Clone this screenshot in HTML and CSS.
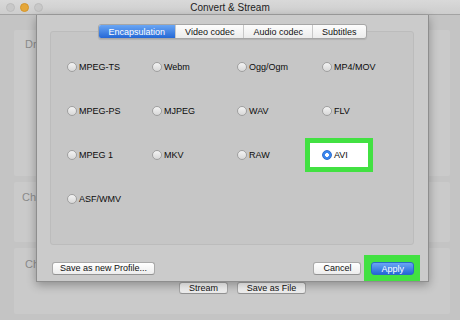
FILE: index.html
```html
<!DOCTYPE html>
<html>

<head>
    <title>Convert &amp; Stream</title>
    <link rel="stylesheet" href="styles.css">
</head>

<body>
    <div class="window">
        <div class="titlebar">
            <div class="lights">
                <span class="light"></span>
                <span class="light light-min"></span>
                <span class="light"></span>
            </div>
            <div class="title">Convert &amp; Stream</div>
        </div>

        <div class="content">
            <div class="panel panel-source"><span class="panel-label">Drop media here</span></div>
            <div class="panel panel-profile"><span class="panel-label">Choose Profile</span></div>
            <div class="panel panel-dest">
                <span class="panel-label">Choose Destination</span>
                <div class="dest-actions">
                    <a class="button button-stream">Stream</a>
                    <a class="button button-file">Save as File</a>
                </div>
            </div>
        </div>

        <div class="sheet">
            <div class="tabs">
                <a class="tab tab-active">Encapsulation</a>
                <a class="tab">Video codec</a>
                <a class="tab">Audio codec</a>
                <a class="tab">Subtitles</a>
            </div>

            <div class="formats">
                <label class="radio"><span class="dot"></span>MPEG-TS</label>
                <label class="radio"><span class="dot"></span>Webm</label>
                <label class="radio"><span class="dot"></span>Ogg/Ogm</label>
                <label class="radio"><span class="dot"></span>MP4/MOV</label>
                <label class="radio"><span class="dot"></span>MPEG-PS</label>
                <label class="radio"><span class="dot"></span>MJPEG</label>
                <label class="radio"><span class="dot"></span>WAV</label>
                <label class="radio"><span class="dot"></span>FLV</label>
                <label class="radio"><span class="dot"></span>MPEG 1</label>
                <label class="radio"><span class="dot"></span>MKV</label>
                <label class="radio"><span class="dot"></span>RAW</label>
                <label class="radio radio-marked"><span class="dot dot-on"></span>AVI</label>
                <label class="radio"><span class="dot"></span>ASF/WMV</label>
            </div>

            <div class="sheet-footer">
                <a class="button button-save">Save as new Profile...</a>
                <a class="button">Cancel</a>
                <span class="marker"><a class="button button-primary">Apply</a></span>
            </div>
        </div>
    </div>
</body>

</html>
```

FILE: styles.css
```css
:root {
    --window-bg: #c4c4c4;
    --panel-bg: #cacaca;
    --sheet-bg: #cbcbcb;
    --marker: #42e142;
    --blue-top: #6aa6f4;
    --blue-bottom: #2468d6;
}

body {
    margin: 0;
    width: 460px;
    height: 320px;
    overflow: hidden;
    font-family: 'Liberation Sans', Arial, sans-serif;
    font-size: 9px;
    color: #111;
}

.window {
    position: relative;
    width: 460px;
    height: 320px;
    background-color: var(--window-bg);
}

.titlebar {
    display: grid;
    grid-template-columns: 1fr auto 1fr;
    align-items: center;
    height: 14px;
    background: linear-gradient(#d9d9d9, #cdcdcd);
    border-bottom: 1px solid #a3a3a3;
}

.lights {
    display: flex;
    gap: 5px;
    padding-left: 6px;
}

.light {
    width: 9px;
    height: 9px;
    box-sizing: border-box;
    border-radius: 50%;
    background-color: #c8c8c8;
    border: 1px solid #bcbcbc;
}

.light-min {
    background-color: #e5a73a;
    border-color: #d4952c;
}

.title {
    font-size: 10px;
    color: #1c1c1c;
}

.content {
    display: flex;
    flex-direction: column;
    gap: 6px;
    padding: 15px 10px 0 14px;
}

.panel {
    box-sizing: border-box;
    border-radius: 2px;
    background-color: var(--panel-bg);
    color: #8a8a8a;
    font-size: 11px;
    white-space: nowrap;
}

.panel-source {
    height: 146px;
    padding: 8px 11px;
}

.panel-profile {
    height: 60px;
    padding: 9px 8px;
}

.panel-dest {
    height: 66px;
    padding: 10px 11px;
}

.dest-actions {
    display: flex;
    gap: 9px;
    margin: 12px 0 0 154px;
}

.button {
    display: inline-flex;
    align-items: center;
    justify-content: center;
    height: 13px;
    box-sizing: border-box;
    padding: 0 9px;
    border: 1px solid #a9a9a9;
    border-bottom-color: #939393;
    border-radius: 3px;
    background: linear-gradient(#ffffff, #ededed);
    color: #111;
    font-size: 9px;
    white-space: nowrap;
    user-select: none;
}

.button-stream {
    width: 49px;
    height: 12px;
}

.button-file {
    width: 69px;
    height: 12px;
}

/* sheet dropped down over the window */

.sheet {
    position: absolute;
    top: 15px;
    left: 36px;
    width: 393px;
    height: 267px;
    box-sizing: border-box;
    display: flex;
    flex-direction: column;
    padding: 9px 14px 0 13px;
    background-color: var(--sheet-bg);
    border: 1px solid #8e8e8e;
    border-top: 0;
    box-shadow: 0 3px 9px rgba(0, 0, 0, 0.3);
}

.tabs {
    position: relative;
    z-index: 1;
    align-self: center;
    display: flex;
    height: 15px;
    box-sizing: border-box;
    border: 1px solid #a6a6a6;
    border-radius: 3px;
    background: linear-gradient(#fdfdfd, #ececec);
    box-shadow: 0 1px 1px rgba(0, 0, 0, 0.1);
}

.tab {
    display: flex;
    align-items: center;
    padding: 0 9px;
    border-left: 1px solid #c8c8c8;
    color: #111;
}

.tab:first-child {
    border-left: 0;
}

.tab-active {
    padding: 0 10px;
    border-radius: 2px 0 0 2px;
    background: linear-gradient(var(--blue-top), var(--blue-bottom));
    color: #fff;
}

.formats {
    display: grid;
    grid-template-columns: repeat(4, 85px);
    grid-auto-rows: 44px;
    align-items: center;
    height: 214px;
    box-sizing: border-box;
    margin-top: -8px;
    padding: 13px 0 0 16px;
    border: 1px solid #bcbcbc;
    border-radius: 3px;
    background-color: #c6c6c6;
}

.radio {
    display: flex;
    align-items: center;
    gap: 2px;
    color: #0c0c0c;
}

.dot {
    width: 10px;
    height: 10px;
    box-sizing: border-box;
    border-radius: 50%;
    border: 1px solid #a0a0a0;
    background: linear-gradient(#f4f4f4, #d8d8d8);
}

.dot-on {
    border-color: #2f6fd0;
    background: radial-gradient(circle, #fff 0 1.6px, #3a86ee 2.2px);
}

.radio-marked {
    width: 58px;
    height: 24px;
    box-sizing: border-box;
    margin-left: -12px;
    padding-left: 12px;
    background-color: #fff;
    box-shadow: 0 0 0 5px var(--marker);
}

.sheet-footer {
    display: flex;
    align-items: center;
    gap: 10px;
    margin-top: 10px;
}

.button-save {
    margin: 0 auto 0 2px;
    padding: 0 7px;
}

.button-primary {
    border-color: #2c68c8;
    background: linear-gradient(var(--blue-top), var(--blue-bottom));
    color: #fff;
}

.marker {
    display: flex;
    margin: 0 -6px 0 -7px;
    padding: 7px 6px 6px 7px;
    background-color: var(--marker);
}
```
